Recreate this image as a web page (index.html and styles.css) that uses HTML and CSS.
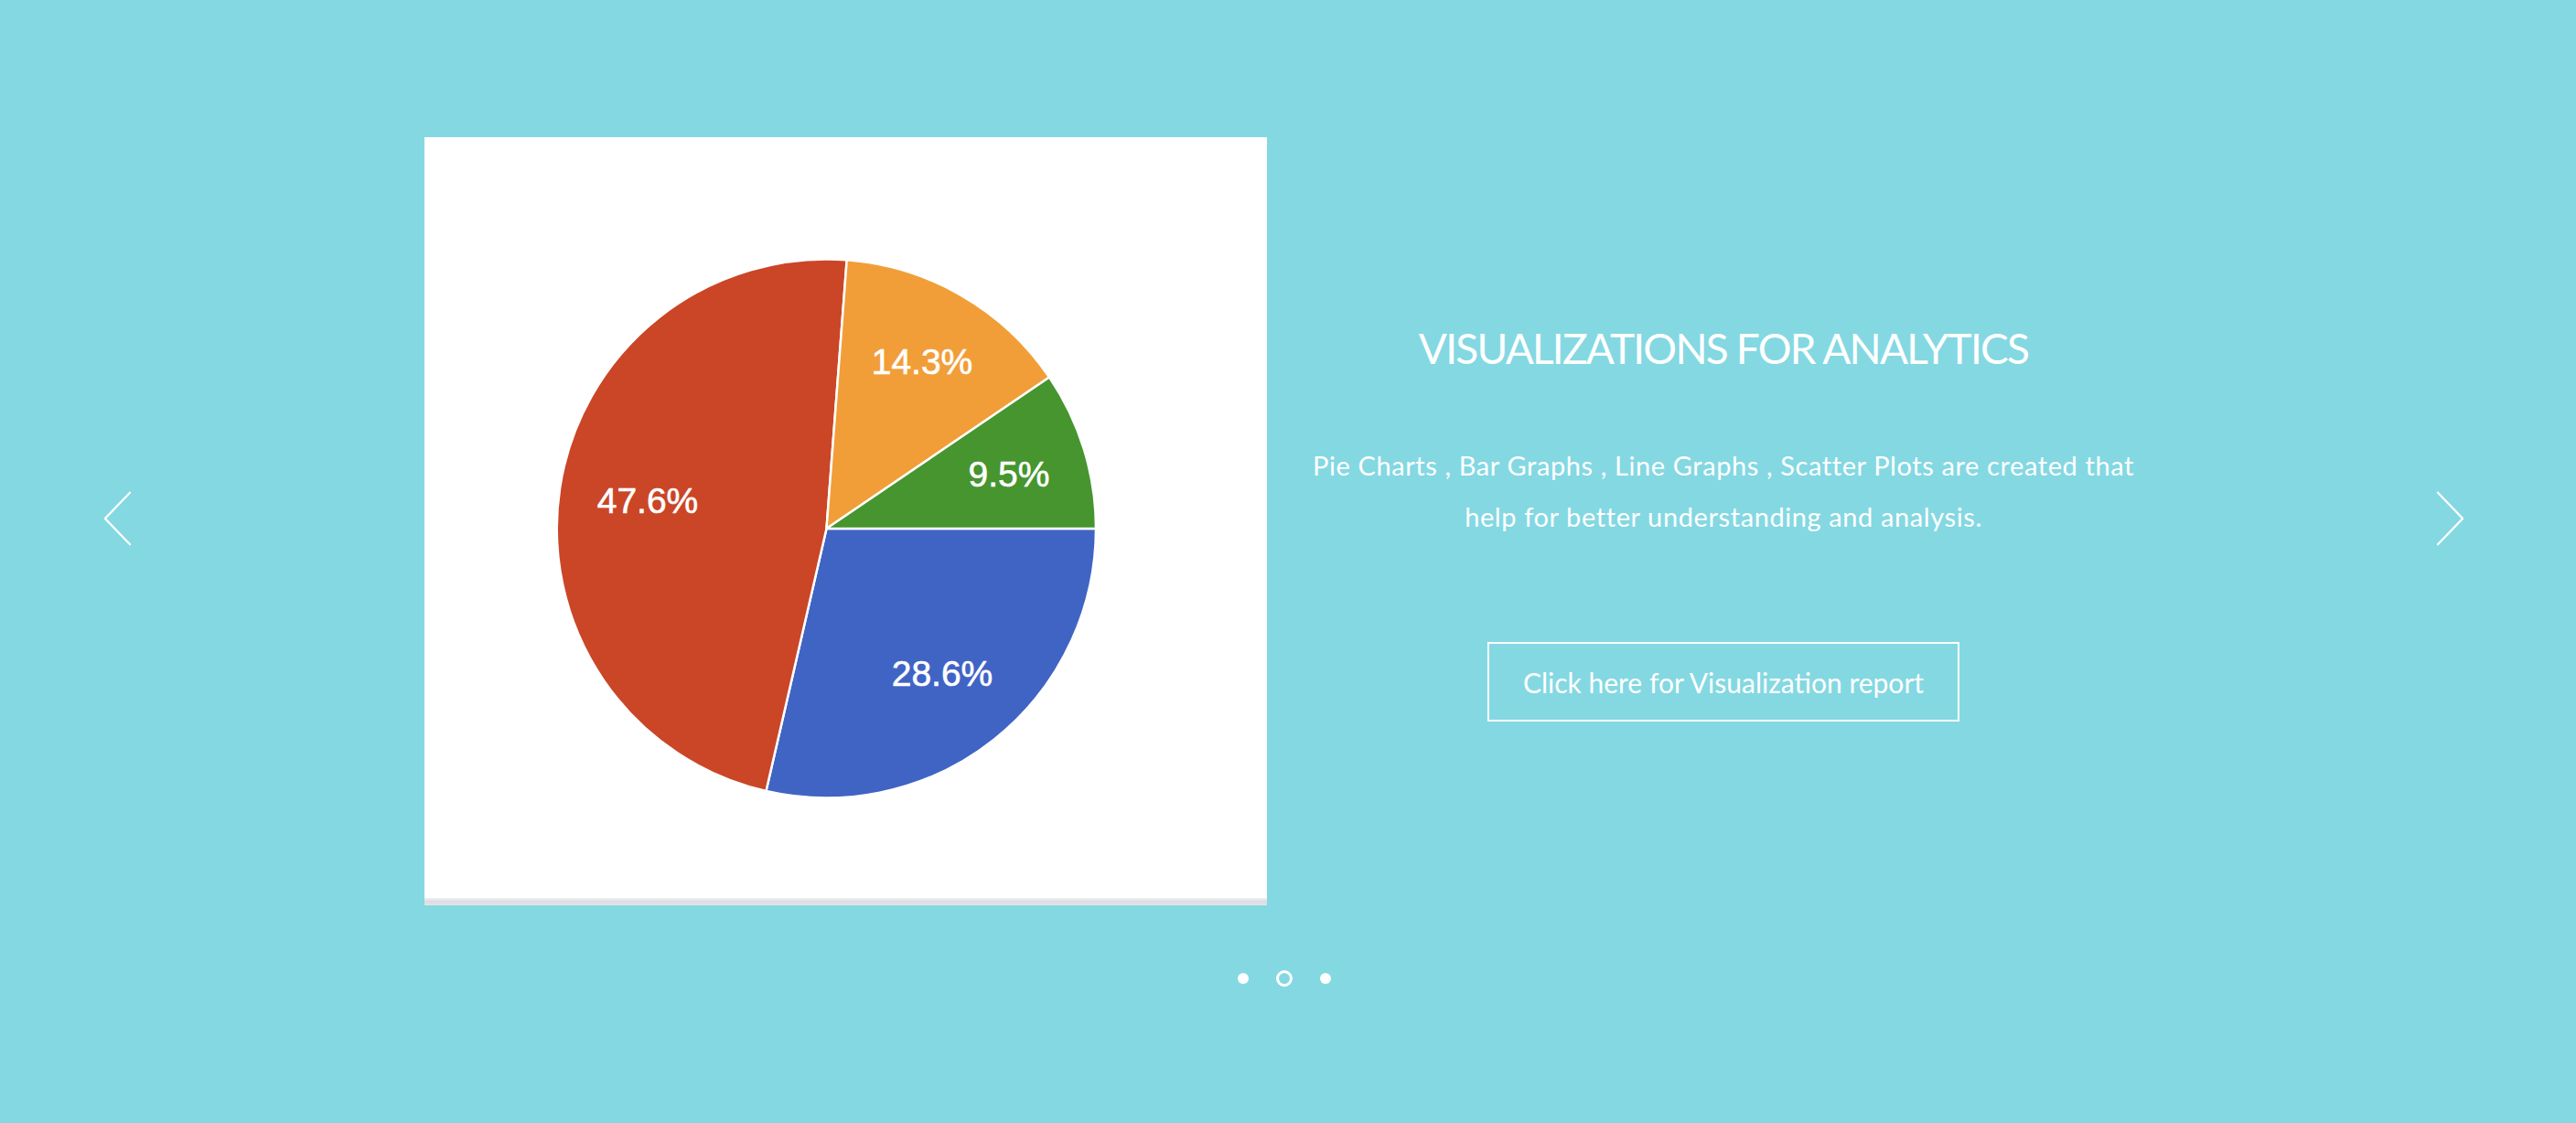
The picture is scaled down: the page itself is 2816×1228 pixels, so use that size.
FILE: index.html
```html
<!DOCTYPE html>
<html lang="en">
<head>
<meta charset="utf-8">
<title>Visualizations for Analytics</title>
<link rel="stylesheet" href="styles.css">
</head>
<body>
<main class="slideshow">
  <section class="stage">
    <button class="nav nav-prev" aria-label="Previous">
      <svg width="30" height="60" viewBox="0 0 30 60"><polyline points="28.7,1 0.9,30 28.7,59" fill="none" stroke="#fff" stroke-width="2.2"/></svg>
    </button>
    <div class="chart-card">
      <svg class="pie" width="921" height="832" viewBox="0 0 921 832">
        <g stroke="#fff" stroke-width="2.5" stroke-linejoin="round">
          <path fill="#4064C4" d="M439.5,428 L734,428 A294.5,294.5 0 0 1 373.45,715 Z"/>
          <path fill="#CA4627" d="M439.5,428 L373.45,715 A294.5,294.5 0 0 1 461.68,134.3 Z"/>
          <path fill="#F19E39" d="M439.5,428 L461.68,134.3 A294.5,294.5 0 0 1 683.1,262.5 Z"/>
          <path fill="#46952F" d="M439.5,428 L683.1,262.5 A294.5,294.5 0 0 1 734,428 Z"/>
        </g>
        <g class="pie-labels" text-anchor="middle">
          <text x="244" y="411">47.6%</text>
          <text x="544" y="259">14.3%</text>
          <text x="639" y="382">9.5%</text>
          <text x="566" y="600">28.6%</text>
        </g>
      </svg>
      <div class="card-edge"></div>
    </div>
    <div class="copy">
      <h1 class="title">VISUALIZATIONS FOR ANALYTICS</h1>
      <p class="lead">Pie Charts , Bar Graphs , Line Graphs , Scatter Plots are created that<br>help for better understanding and analysis.</p>
      <a class="cta" href="#">Click here for Visualization report</a>
    </div>
    <button class="nav nav-next" aria-label="Next">
      <svg width="30" height="60" viewBox="0 0 30 60"><polyline points="1.3,1 29.1,30 1.3,59" fill="none" stroke="#fff" stroke-width="2.2"/></svg>
    </button>
  </section>
  <nav class="dots">
    <span class="dot"></span>
    <span class="dot dot-active"></span>
    <span class="dot"></span>
  </nav>
</main>
</body>
</html>
```
FILE: styles.css
```css
html, body {
  margin: 0;
  padding: 0;
}
body {
  background: #84D8E2;
  width: 2816px;
  height: 1228px;
  overflow: hidden;
  font-family: "Lato", "Open Sans", sans-serif;
  color: #fff;
}
.slideshow {
  display: flex;
  flex-direction: column;
  padding-top: 150px;
}
.stage {
  display: flex;
  align-items: center;
  height: 840px;
  padding: 0 123px 0 114px;
}
.nav {
  display: flex;
  width: 30px;
  height: 60px;
  padding: 0;
  margin: 0 0 6px 0;
  border: 0;
  background: none;
  cursor: pointer;
}
.nav-next {
  margin-left: auto;
}
.chart-card {
  display: flex;
  flex-direction: column;
  width: 921px;
  height: 840px;
  margin-left: 320px;
  background: #fff;
}
.pie {
  display: block;
}
.pie-labels text {
  font-family: "Liberation Sans", Arial, sans-serif;
  font-size: 39px;
  fill: #fff;
  stroke: #fff;
  stroke-width: 0.6px;
}
.card-edge {
  height: 8px;
  background: linear-gradient(#f1f1f5, #dcdce4 45%, #e4e4e6);
}
.copy {
  align-self: flex-start;
  display: flex;
  flex-direction: column;
  align-items: center;
  width: 918px;
  margin-left: 40px;
  padding-top: 208px;
  text-align: center;
}
.title {
  margin: 0;
  font-size: 46px;
  line-height: 46px;
  font-weight: 400;
  letter-spacing: -1.8px;
  white-space: nowrap;
}
.lead {
  margin: 77px 0 0;
  font-size: 29px;
  line-height: 56px;
  font-weight: 400;
  letter-spacing: 0.6px;
  white-space: nowrap;
}
.cta {
  display: flex;
  align-items: center;
  justify-content: center;
  box-sizing: border-box;
  width: 516px;
  height: 87px;
  margin-top: 109px;
  border: 2px solid #fff;
  color: #fff;
  text-decoration: none;
  font-size: 30px;
  font-weight: 400;
}
.dots {
  display: flex;
  justify-content: center;
  align-items: center;
  gap: 27px;
  height: 18px;
  margin-top: 71px;
  padding-right: 8px;
}
.dot {
  width: 12px;
  height: 12px;
  border-radius: 50%;
  background: #fff;
  margin: 0 3px;
}
.dot-active {
  box-sizing: border-box;
  width: 18px;
  height: 18px;
  margin: 0;
  background: none;
  border: 3px solid #fff;
}
```
